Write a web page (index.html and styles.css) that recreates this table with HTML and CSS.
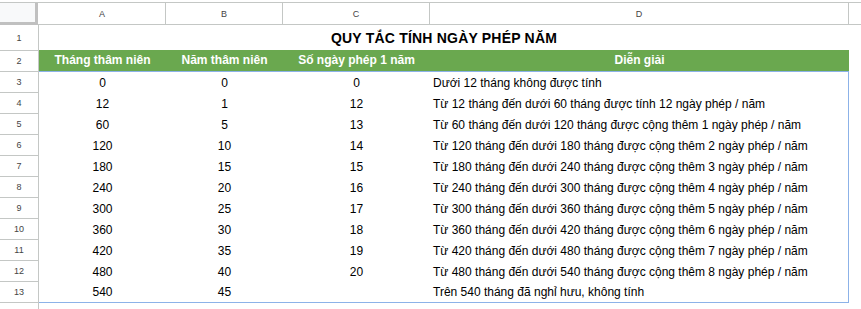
FILE: index.html
```html
<!DOCTYPE html>
<html lang="vi">
<head>
<meta charset="utf-8">
<link rel="stylesheet" href="styles.css">
<title>Quy tắc tính ngày phép năm</title>
</head>
<body>
<div class="sheet">
  <div class="top-gap"></div>
  <div class="colhead">
    <div class="corner"></div>
    <div class="ch">A</div>
    <div class="ch">B</div>
    <div class="ch">C</div>
    <div class="ch">D</div>
    <div class="ch last"></div>
  </div>

  <div class="row r1">
    <div class="rh">1</div>
    <div class="title">QUY TẮC TÍNH NGÀY PHÉP NĂM</div>
    <div class="cell"></div>
  </div>

  <div class="row">
    <div class="rh">2</div>
    <div class="green">
      <div class="gh">Tháng thâm niên</div>
      <div class="gh">Năm thâm niên</div>
      <div class="gh">Số ngày phép 1 năm</div>
      <div class="gh">Diễn giải</div>
    </div>
    <div class="cell"></div>
  </div>

  <div class="body">
    <div class="rhcol">
      <div class="rh">3</div><div class="rh">4</div><div class="rh">5</div><div class="rh">6</div>
      <div class="rh">7</div><div class="rh">8</div><div class="rh">9</div><div class="rh">10</div>
      <div class="rh">11</div><div class="rh">12</div><div class="rh">13</div>
    </div>
    <div class="data">
      <div class="dr"><span>0</span><span>0</span><span>0</span><span class="txt">Dưới 12 tháng không được tính</span></div>
      <div class="dr"><span>12</span><span>1</span><span>12</span><span class="txt">Từ 12 tháng đến dưới 60 tháng được tính 12 ngày phép / năm</span></div>
      <div class="dr"><span>60</span><span>5</span><span>13</span><span class="txt">Từ 60 tháng đến dưới 120 tháng được cộng thêm 1 ngày phép / năm</span></div>
      <div class="dr"><span>120</span><span>10</span><span>14</span><span class="txt">Từ 120 tháng đến dưới 180 tháng được cộng thêm 2 ngày phép / năm</span></div>
      <div class="dr"><span>180</span><span>15</span><span>15</span><span class="txt">Từ 180 tháng đến dưới 240 tháng được cộng thêm 3 ngày phép / năm</span></div>
      <div class="dr"><span>240</span><span>20</span><span>16</span><span class="txt">Từ 240 tháng đến dưới 300 tháng được cộng thêm 4 ngày phép / năm</span></div>
      <div class="dr"><span>300</span><span>25</span><span>17</span><span class="txt">Từ 300 tháng đến dưới 360 tháng được cộng thêm 5 ngày phép / năm</span></div>
      <div class="dr"><span>360</span><span>30</span><span>18</span><span class="txt">Từ 360 tháng đến dưới 420 tháng được cộng thêm 6 ngày phép / năm</span></div>
      <div class="dr"><span>420</span><span>35</span><span>19</span><span class="txt">Từ 420 tháng đến dưới 480 tháng được cộng thêm 7 ngày phép / năm</span></div>
      <div class="dr"><span>480</span><span>40</span><span>20</span><span class="txt">Từ 480 tháng đến dưới 540 tháng được cộng thêm 8 ngày phép / năm</span></div>
      <div class="dr"><span>540</span><span>45</span><span></span><span class="txt">Trên 540 tháng đã nghỉ hưu, không tính</span></div>
    </div>
    <div class="cell"></div>
  </div>

  <div class="row r14">
    <div class="rh">14</div>
    <div class="cell"></div>
  </div>
</div>
</body>
</html>
```

FILE: styles.css
```css
* { box-sizing: border-box; }
html, body { margin: 0; padding: 0; background: #fff; }
body { font-family: "Liberation Sans", Arial, sans-serif; color: #000; overflow: hidden; }

.sheet { width: 861px; height: 309px; overflow: hidden; }
.top-gap { height: 2px; }

.colhead {
  display: grid;
  grid-template-columns: 39px 127px 117px 147px 419px 1fr;
  height: 23px;
  border-top: 1px solid #c4c7c5;
  border-bottom: 1px solid #c4c7c5;
}
.corner {
  background: #f8f9fa;
  border-right: 3px solid #c0c0c0;
  border-bottom: 3px solid #c0c0c0;
  margin-right: 1px;
  height: 22px;
  margin-bottom: -1px;
}
.ch {
  display: flex; align-items: center; justify-content: center;
  font-size: 9px; color: #444;
  border-right: 1px solid #c4c7c5;
}
.ch.last { border-right: none; }

.row {
  display: grid;
  grid-template-columns: 39px 810px 1fr;
  height: 21px;
}
.row.r1 { height: 26px; }
.rh {
  display: flex; align-items: center; justify-content: center;
  font-size: 9px; color: #444;
  border-right: 1px solid #c4c7c5;
  border-bottom: 1px solid #c4c7c5;
  height: 21px;
}
.r1 .rh { height: 26px; }
.r14 .rh { border-bottom: none; }

.title {
  display: flex; align-items: center; justify-content: center;
  font-size: 14px; font-weight: bold; letter-spacing: 0.2px;
  padding-bottom: 1px;
}

.green {
  display: grid;
  grid-template-columns: 127px 117px 147px 419px;
  background: #6aa84f;
  height: 21px;
  margin-top: -1px;
}
.gh {
  display: flex; align-items: center; justify-content: center;
  color: #fff; font-size: 12px; font-weight: bold;
  padding-bottom: 1px;
}

.body {
  display: grid;
  grid-template-columns: 39px 810px 1fr;
}
.rhcol { display: flex; flex-direction: column; }
.data {
  border-top: 1px solid #8cb2e8;
  border-right: 1px solid #8cb2e8;
  border-bottom: 1px solid #8cb2e8;
  margin-top: -1px;
  height: 232px;
}
.dr {
  display: grid;
  grid-template-columns: 127px 117px 147px 1fr;
  height: 21px;
  font-size: 12px;
  align-items: center;
}
.dr:last-child { height: 20px; }
.dr span { text-align: center; white-space: nowrap; }
.dr .txt { text-align: left; padding-left: 3px; }
```
